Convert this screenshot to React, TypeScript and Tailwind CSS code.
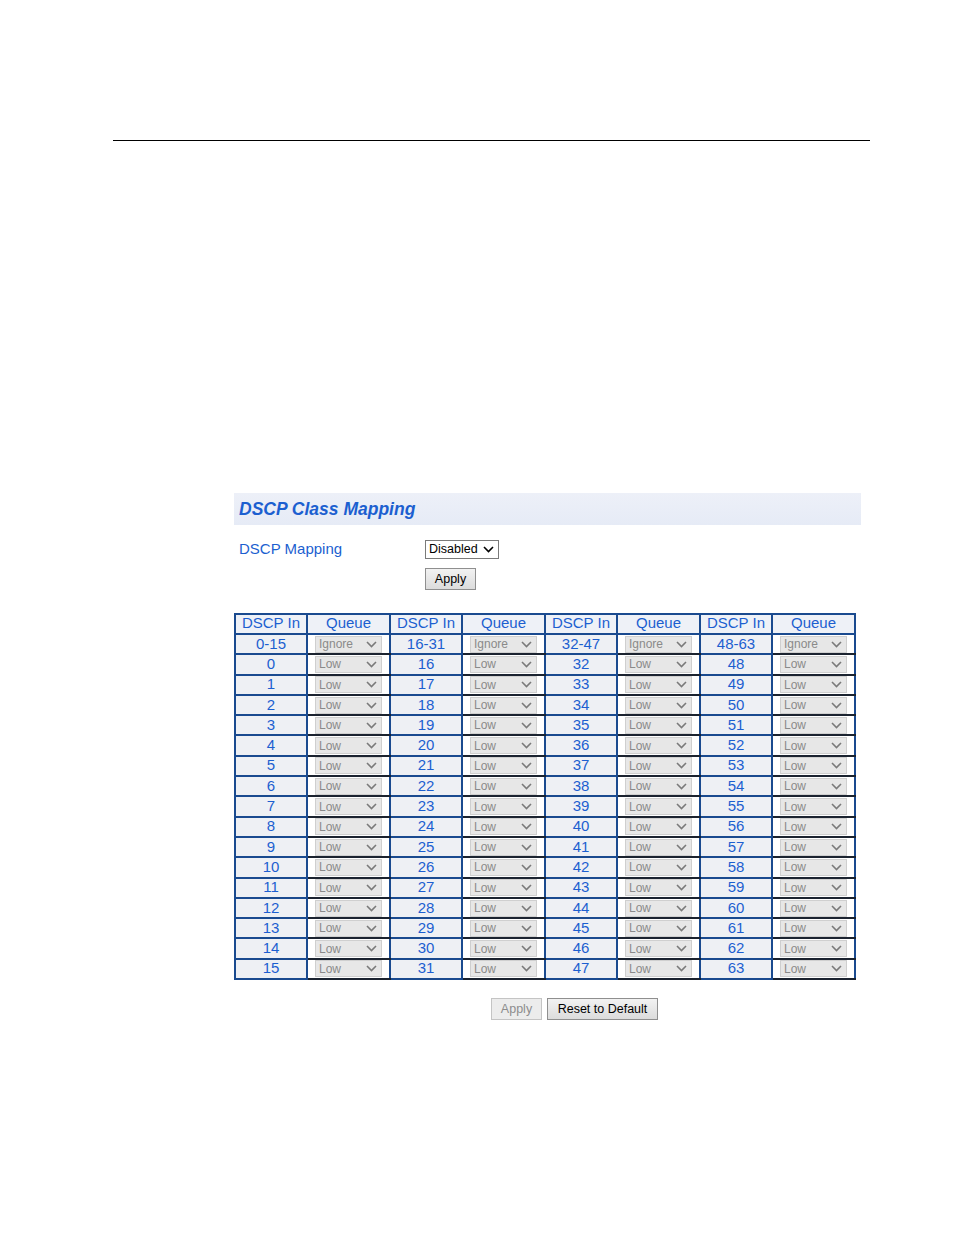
import React from 'react';

const blue = 'text-[#1c5fd0]';

const Chevron = ({ className = '' }: { className?: string }) => (
  <svg width="11" height="7" viewBox="0 0 11 7" className={className}>
    <path d="M1 1l4.5 4.5L10 1" fill="none" stroke="currentColor" strokeWidth="1.6" />
  </svg>
);

const QueueSelect = ({ value }: { value: string }) => (
  <div className="mx-auto flex h-[17px] w-[67px] items-center justify-between border border-[#cfcfcf] bg-[#e7e7e7] pl-[3px] pr-[4px] text-[12px] leading-none text-[#8a8a8a]">
    <span>{value}</span>
    <Chevron className="text-[#7a7a7a]" />
  </div>
);

const rows: { label: string[]; value: string }[] = [
  { label: ['0-15', '16-31', '32-47', '48-63'], value: 'Ignore' },
  ...Array.from({ length: 16 }, (_, i) => ({
    label: [0, 16, 32, 48].map((b) => String(b + i)),
    value: 'Low',
  })),
];

export default function App() {
  return (
    <div className="relative h-[1235px] w-[954px] bg-white font-['Liberation_Sans',Arial,sans-serif]">
      <div className="pt-[140px] pl-[113px]">
        <div className="h-px w-[757px] bg-black" />
      </div>

      <div className="ml-[234px] mt-[352px] w-[627px]">
        <div className="flex h-[32px] items-center bg-gradient-to-b from-[#edf0f8] to-[#e6ebf6] pl-[5px]">
          <h1 className={`text-[17.5px] font-bold italic ${blue}`}>DSCP Class Mapping</h1>
        </div>

        <div className="mt-[15px] flex items-start">
          <div className={`w-[191px] pl-[5px] text-[15px] leading-[18px] ${blue}`}>DSCP Mapping</div>
          <div className="flex flex-col items-start gap-[9px]">
            <div className="flex h-[19px] w-[74px] items-center justify-between border border-[#7a7a7a] bg-white pl-[3px] pr-[4px] text-[12.5px] text-black">
              <span>Disabled</span>
              <Chevron className="text-black" />
            </div>
            <button className="h-[22px] w-[51px] border border-[#8f8f8f] bg-gradient-to-b from-[#f2f2f2] to-[#dcdcdc] text-[12.5px] text-black">
              Apply
            </button>
          </div>
        </div>

        <table className="mt-[23px] w-[621px] table-fixed border-collapse border-2 border-[#0d1f3d]">
          <colgroup>
            {[0, 1, 2, 3].map((i) => (
              <React.Fragment key={i}>
                <col className="w-[72px]" />
                <col className="w-[83px]" />
              </React.Fragment>
            ))}
          </colgroup>
          <thead>
            <tr>
              {[0, 1, 2, 3].map((i) => (
                <React.Fragment key={i}>
                  <th className={`h-[20px] border-2 border-[#1a4a8f] bg-[#eef1f7] p-0 pb-[3px] text-[15px] font-normal leading-none ${blue}`}>
                    DSCP In
                  </th>
                  <th className={`h-[20px] border-2 border-[#1a4a8f] bg-[#eef1f7] p-0 pb-[3px] text-[15px] font-normal leading-none ${blue}`}>
                    Queue
                  </th>
                </React.Fragment>
              ))}
            </tr>
          </thead>
          <tbody>
            {rows.map((r, ri) => (
              <tr key={ri}>
                {r.label.map((l, ci) => (
                  <React.Fragment key={ci}>
                    <td className={`h-[20.3px] border-2 border-[#1a4a8f] bg-[#eef0f4] p-0 pb-[2px] text-center text-[15px] leading-none ${blue}`}>
                      {l}
                    </td>
                    <td className="h-[20.3px] border-2 border-x-[#1a4a8f] border-y-[#1b2330] bg-white p-0">
                      <QueueSelect value={r.value} />
                    </td>
                  </React.Fragment>
                ))}
              </tr>
            ))}
          </tbody>
        </table>

        <div className="mt-[18px] flex gap-[5px] pl-[257px]">
          <button className="h-[22px] w-[51px] border border-[#c4c4c4] bg-[#ececec] text-[12.5px] text-[#8c8c8c]">
            Apply
          </button>
          <button className="h-[22px] w-[111px] border border-[#8f8f8f] bg-gradient-to-b from-[#f2f2f2] to-[#dcdcdc] text-[12.5px] text-black">
            Reset to Default
          </button>
        </div>
      </div>
    </div>
  );
}
